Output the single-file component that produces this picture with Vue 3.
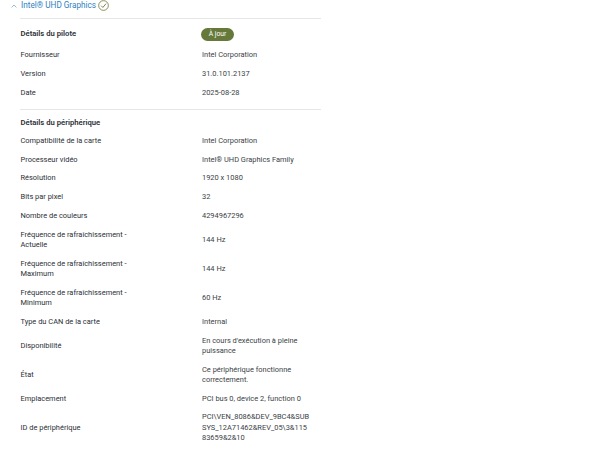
<script setup>
const driver = [
  ['Fournisseur', 'Intel Corporation'],
  ['Version', '31.0.101.2137'],
  ['Date', '2025-08-28'],
]
const device = [
  ['Compatibilité de la carte', 'Intel Corporation'],
  ['Processeur vidéo', 'Intel® UHD Graphics Family'],
  ['Résolution', '1920 x 1080'],
  ['Bits par pixel', '32'],
  ['Nombre de couleurs', '4294967296'],
  ['Fréquence de rafraîchissement - Actuelle', '144 Hz'],
  ['Fréquence de rafraîchissement - Maximum', '144 Hz'],
  ['Fréquence de rafraîchissement - Minimum', '60 Hz'],
  ['Type du CAN de la carte', 'Internal'],
  ['Disponibilité', "En cours d'exécution à pleine puissance"],
  ['État', 'Ce périphérique fonctionne correctement.'],
  ['Emplacement', 'PCI bus 0, device 2, function 0'],
  ['ID de périphérique', 'PCI\\VEN_8086&DEV_9BC4&SUBSYS_12A71462&REV_05\\3&11583659&2&10'],
]
</script>

<template>
  <div class="page">
    <header class="title">
      <svg class="chev" width="6" height="4" viewBox="0 0 6 4"><path d="M0.6 3.4 L3 1 L5.4 3.4" fill="none" stroke="#8fb0cc" stroke-width="0.9"/></svg>
      <span class="name">Intel® UHD Graphics</span>
      <svg class="ok" width="11" height="11" viewBox="0 0 12 12"><circle cx="6" cy="6" r="5.3" fill="none" stroke="#7d8a4e" stroke-width="1"/><path d="M3.4 6.2 L5.3 8.1 L8.8 4" fill="none" stroke="#6f7f40" stroke-width="1"/></svg>
    </header>
    <section class="block first">
      <div class="row head">
        <div class="label">Détails du pilote</div>
        <div class="value"><span class="badge">À jour</span></div>
      </div>
      <div v-for="r in driver" :key="r[0]" class="row">
        <div class="label">{{ r[0] }}</div>
        <div class="value">{{ r[1] }}</div>
      </div>
    </section>
    <section class="block second">
      <div class="row head2">
        <div class="label">Détails du périphérique</div>
      </div>
      <div v-for="r in device" :key="r[0]" class="row">
        <div class="label">{{ r[0] }}</div>
        <div class="value">{{ r[1] }}</div>
      </div>
    </section>
  </div>
</template>

<style scoped>
.page {
  width: 600px;
  height: 456px;
  overflow: hidden;
  background: #fff;
  font-family: Roboto, "Open Sans", sans-serif;
  font-size: 7.45px;
  line-height: 10.4px;
  color: #2b2f36;
}
.title {
  display: flex;
  align-items: center;
  height: 11px;
  padding-left: 11px;
}
.chev { margin-right: 4px; }
.name {
  font-size: 8.2px;
  color: #2f7fc1;
}
.ok { margin-left: 2px; }
.block {
  margin-left: 20px;
  width: 301px;
  border-top: 1px solid #e6e6e6;
}
.first { margin-top: 7px; padding-top: 6px; }
.second { margin-top: 7px; padding-top: 7.5px; }
.row {
  display: flex;
  align-items: center;
  padding: 4.15px 0;
}
.label {
  width: 182px;
  padding: 0 50px 0 0.5px;
  box-sizing: border-box;
}
.value {
  width: 108.5px;
  overflow-wrap: anywhere;
  color: #3a3f46;
}
.head .label, .head2 .label { font-size: 7.7px; font-weight: 600; color: #2b2f36; }
.head { padding: 3px 0 5px; }
.head2 { padding: 0 0 4px; }
.badge {
  display: inline-block;
  width: 33px;
  height: 13px;
  line-height: 13px;
  text-align: center;
  border-radius: 7px;
  background: #66793a;
  color: #fff;
  font-size: 6.8px;
  margin-left: -1px;
}
</style>
